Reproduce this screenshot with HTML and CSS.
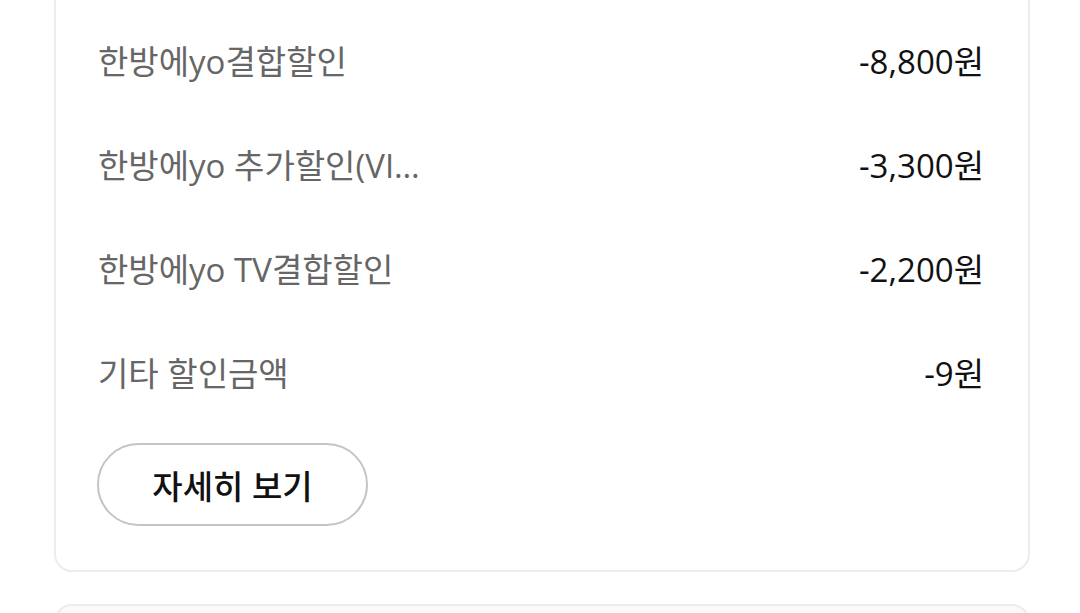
FILE: index.html
```html
<!DOCTYPE html>
<html lang="ko">
<head>
<meta charset="utf-8">
<link rel="stylesheet" href="styles.css">
</head>
<body>
<div class="page">
  <section class="card">
    <div class="row">
      <span class="label">한방에yo결합할인</span>
      <span class="value">-8,800원</span>
    </div>
    <div class="row">
      <span class="label clip">한방에yo 추가할인(VIP)</span>
      <span class="value">-3,300원</span>
    </div>
    <div class="row">
      <span class="label">한방에yo TV결합할인</span>
      <span class="value">-2,200원</span>
    </div>
    <div class="row">
      <span class="label">기타 할인금액</span>
      <span class="value">-9원</span>
    </div>
    <button class="more">자세히 보기</button>
  </section>
  <section class="card next"></section>
</div>
</body>
</html>
```

FILE: styles.css
```css
* { box-sizing: border-box; }
html, body { margin: 0; background: #fff; }
body {
  font-family: "Open Sans", "Noto Sans CJK KR", sans-serif;
  overflow: hidden;
  height: 613px;
}
.page {
  padding: 0 50px 0 54px;
  display: flex;
  flex-direction: column;
  gap: 32px;
}
.card {
  background: #fff;
  border: 2px solid #ececec;
  border-top: none;
  border-radius: 0 0 18px 18px;
  padding: 8px 44px 44px 42px;
  display: flex;
  flex-direction: column;
  align-items: stretch;
}
.row {
  height: 104px;
  display: flex;
  align-items: center;
  justify-content: space-between;
}
.label {
  font-size: 33px;
  color: #666;
  white-space: nowrap;
}
.label.clip {
  max-width: 322px;
  overflow: hidden;
  text-overflow: ellipsis;
}
.value {
  font-size: 33px;
  color: #111;
  font-weight: 400;
}
.more {
  align-self: flex-start;
  margin-top: 19px;
  margin-left: -1px;
  width: 271px;
  height: 83px;
  border: 2px solid #c4c4c4;
  border-radius: 42px;
  background: #fff;
  font-family: inherit;
  font-size: 33px;
  font-weight: 500;
  color: #111;
  padding: 0;
}
.card.next {
  border-top: 2px solid #ececec;
  border-radius: 18px;
  background: #fafafa;
  height: 60px;
  padding: 0;
}
```
